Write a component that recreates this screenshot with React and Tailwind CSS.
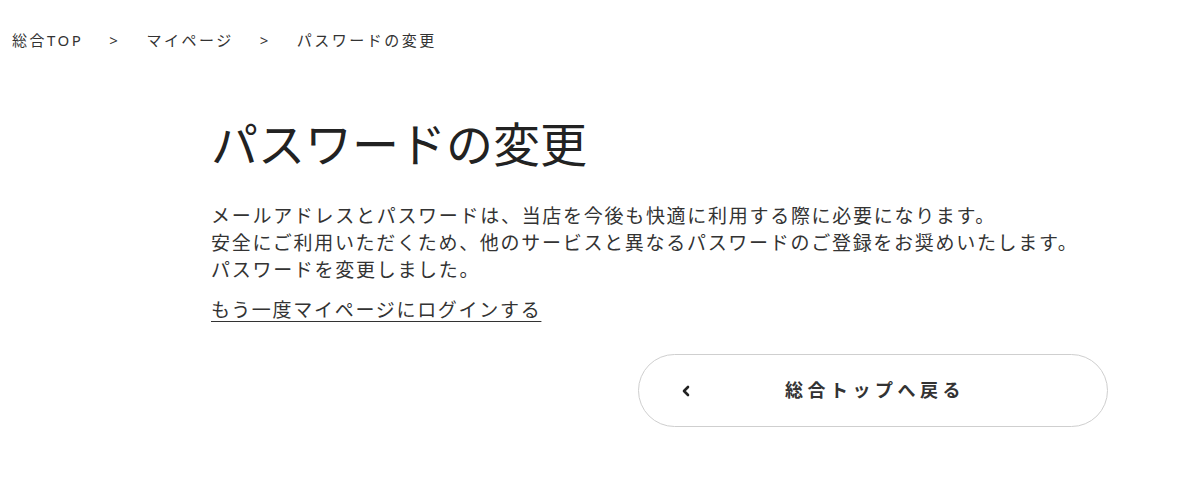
export default function App() {
  const font = { fontFamily: '"Noto Sans", "Noto Sans CJK JP", sans-serif' };
  return (
    <div className="w-[1200px] h-[488px] bg-white text-[#222]" style={font}>
      <nav className="flex items-center pl-[12px] pt-[30px] text-[15px] leading-[20px] text-[#333] tracking-[2.5px]">
        <span>総合TOP</span>
        <span className="mx-[26px]">&gt;</span>
        <span>マイページ</span>
        <span className="mx-[26px]">&gt;</span>
        <span>パスワードの変更</span>
      </nav>
      <main className="ml-[211px] w-[897px] pt-[64px]">
        <h1 className="text-[47px] leading-[60px] font-normal text-[#222]">パスワードの変更</h1>
        <div className="mt-[29px] text-[19px] leading-[27px] tracking-[0.09em] text-[#333]">
          <p>メールアドレスとパスワードは、当店を今後も快適に利用する際に必要になります。</p>
          <p>安全にご利用いただくため、他のサービスと異なるパスワードのご登録をお奨めいたします。</p>
          <p>パスワードを変更しました。</p>
          <p className="mt-[13px]"><a href="#" className="underline underline-offset-[4px] text-[#333]">もう一度マイページにログインする</a></p>
        </div>
        <div className="flex justify-end mt-[30px]">
          <button className="relative w-[470px] h-[73px] rounded-full border border-[#cfcfcf] bg-white flex items-center justify-center">
            <svg className="absolute left-[42px] top-1/2 -translate-y-1/2" width="10" height="12" viewBox="0 0 10 12">
              <polyline points="7,2 3,6 7,10" fill="none" stroke="#222" strokeWidth="2.6" strokeLinecap="round" strokeLinejoin="round" />
            </svg>
            <span className="text-[18px] font-bold tracking-[0.25em] text-[#333] pl-[4px]">総合トップへ戻る</span>
          </button>
        </div>
      </main>
    </div>
  );
}
